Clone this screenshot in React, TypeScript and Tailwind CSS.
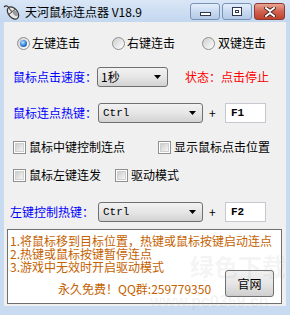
import React from "react";

function Radio({ checked }: { checked?: boolean }) {
  return (
    <span className="inline-flex h-[13px] w-[13px] shrink-0 items-center justify-center rounded-full border border-[#8e8f8f] bg-linear-to-br from-[#cfcfcf] to-[#ffffff]">
      {checked ? (
        <span className="h-[7px] w-[7px] rounded-full bg-[radial-gradient(circle_at_40%_35%,#bfe6ff,#2a7ad6_55%,#174c94)]" />
      ) : (
        <span className="h-[7px] w-[7px] rounded-full bg-linear-to-br from-[#d4d4d4] to-[#f8f8f8]" />
      )}
    </span>
  );
}

function Check() {
  return (
    <span className="inline-flex h-[13px] w-[13px] shrink-0 items-center justify-center border border-[#8e8f8f] bg-white">
      <span className="h-[9px] w-[9px] border border-[#d0d0d0] bg-linear-to-br from-[#cdcdcd] to-[#f6f6f6]" />
    </span>
  );
}

function Arrow() {
  return (
    <svg width="7" height="4" viewBox="0 0 7 4">
      <path d="M0 0h7L3.5 4z" fill="#000" />
    </svg>
  );
}

function Combo({ text, wide }: { text: string; wide?: boolean }) {
  return (
    <div
      className={
        wide
          ? "flex h-[20px] w-[105px] shrink-0 items-center justify-between rounded-[3px] border border-[#707070] bg-linear-to-b from-[#f2f2f2] via-[#e6e6e6] to-[#d2d2d2] pl-[4px] pr-[6px]"
          : "flex h-[20px] w-[71px] shrink-0 items-center justify-between rounded-[3px] border border-[#707070] bg-linear-to-b from-[#f2f2f2] via-[#e6e6e6] to-[#d2d2d2] pl-[3px] pr-[6px]"
      }
    >
      {wide ? (
        <span className="font-['Liberation_Mono',monospace] text-[11px] leading-none text-black">{text}</span>
      ) : (
        <span className="text-[12px] leading-none text-black">{text}</span>
      )}
      <Arrow />
    </div>
  );
}

function TextBox({ text }: { text: string }) {
  return (
    <div className="flex h-[20px] w-[41px] shrink-0 items-center border border-[#c5c8cf] bg-white pl-[5px] font-['Liberation_Mono',monospace] text-[11px] font-bold leading-none text-black">
      {text}
    </div>
  );
}

function MouseIcon() {
  return (
    <svg width="18" height="16" viewBox="0 0 18 16">
      <path d="M1 3 C3 1 5 2 6 4" stroke="#333" strokeWidth="1.2" fill="none" />
      <g transform="rotate(-40 10 9)">
        <ellipse cx="10" cy="9" rx="4.5" ry="7" fill="#e8e8e8" stroke="#333" strokeWidth="1.2" />
        <path d="M5.6 7.5h8.8M10 2v5.5" stroke="#555" strokeWidth="1" />
        <ellipse cx="11.5" cy="11" rx="2" ry="3" fill="#9a9a9a" />
      </g>
    </svg>
  );
}

export default function App() {
  return (
    <div className="relative flex h-[315px] w-[290px] flex-col overflow-hidden bg-[#c9dbf1] font-['Noto_Sans_CJK_SC',sans-serif] text-[12px] text-black">
      {/* Title bar */}
      <div className="flex h-[22px] shrink-0 items-start bg-linear-to-b from-[#d9e6f6] to-[#c3d7ef]">
        <div className="ml-[3px] mt-[4px]">
          <MouseIcon />
        </div>
        <span className="ml-[4px] mt-[4px] text-[12px] leading-[16px] text-black">天河鼠标连点器 V18.9</span>
        <div className="ml-auto mr-[5px] mt-[3px] flex gap-[2px]">
          <div className="flex h-[17px] w-[30px] items-center justify-center rounded-[3px] border border-[#7a92b5] bg-linear-to-b from-[#e4eefb] via-[#c9daf0] to-[#b3c9e6]">
            <span className="mt-[5px] h-[4px] w-[11px] border border-[#2d3a4f] bg-white" />
          </div>
          <div className="flex h-[17px] w-[30px] items-center justify-center rounded-[3px] border border-[#7a92b5] bg-linear-to-b from-[#e4eefb] via-[#c9daf0] to-[#b3c9e6]">
            <span className="flex h-[9px] w-[10px] items-center justify-center border border-[#2d3a4f] bg-white">
              <span className="h-[3px] w-[4px] border border-[#2d3a4f]" />
            </span>
          </div>
          <div className="flex h-[17px] w-[31px] items-center justify-center rounded-[3px] border border-[#8a3a33] bg-linear-to-b from-[#e9a593] via-[#d0624f] to-[#c0402e]">
            <svg width="12" height="10" viewBox="0 0 12 10">
              <path d="M2 1l4 3 4-3M2 9l4-3 4 3" stroke="#3a1a16" strokeWidth="3.6" fill="none" strokeLinecap="square" />
              <path d="M2 1l4 3 4-3M2 9l4-3 4 3" stroke="#fff" strokeWidth="2" fill="none" strokeLinecap="square" />
            </svg>
          </div>
        </div>
      </div>

      {/* Client area */}
      <div className="mx-[4px] flex h-[284px] shrink-0 flex-col bg-[#f0f0f0]">
        {/* radios */}
        <div className="mt-[14px] flex h-[14px] items-center">
          <div className="ml-[13px] flex w-[95px] items-center gap-[2px]">
            <Radio checked />
            <span className="leading-none">左键连击</span>
          </div>
          <div className="flex w-[90px] items-center gap-[2px]">
            <Radio />
            <span className="leading-none">右键连击</span>
          </div>
          <div className="flex items-center gap-[3px]">
            <Radio />
            <span className="leading-none">双键连击</span>
          </div>
        </div>

        {/* speed */}
        <div className="mt-[17px] flex h-[20px] items-center">
          <span className="ml-[9px] w-[84px] leading-none text-[#0000ff]">鼠标点击速度：</span>
          <Combo text="1秒" />
          <span className="ml-[17px] leading-none text-[#ff0000]">状态：点击停止</span>
        </div>

        {/* hotkey */}
        <div className="mt-[16px] flex h-[20px] items-center">
          <span className="ml-[9px] w-[85px] leading-none text-[#0000ff]">鼠标连点热键：</span>
          <Combo text="Ctrl" wide />
          <span className="ml-[6px] w-[16px] leading-none">+</span>
          <TextBox text="F1" />
        </div>

        {/* checkboxes row 1 */}
        <div className="mt-[17px] flex h-[14px] items-center">
          <div className="ml-[9px] flex w-[145px] items-center gap-[3px]">
            <Check />
            <span className="leading-none">鼠标中键控制连点</span>
          </div>
          <div className="flex items-center gap-[3px]">
            <Check />
            <span className="leading-none">显示鼠标点击位置</span>
          </div>
        </div>

        {/* checkboxes row 2 */}
        <div className="mt-[14px] flex h-[14px] items-center">
          <div className="ml-[9px] flex w-[102px] items-center gap-[3px]">
            <Check />
            <span className="leading-none">鼠标左键连发</span>
          </div>
          <div className="flex items-center gap-[3px]">
            <Check />
            <span className="leading-none">驱动模式</span>
          </div>
        </div>

        {/* left hotkey */}
        <div className="mt-[20px] flex h-[20px] items-center">
          <span className="ml-[6px] w-[88px] leading-none text-[#0000ff]">左键控制热键：</span>
          <Combo text="Ctrl" wide />
          <span className="ml-[6px] w-[16px] leading-none">+</span>
          <TextBox text="F2" />
        </div>

        {/* info box */}
        <div className="relative ml-[3px] mt-[7px] h-[75px] w-[275px] border border-[#6f6f6f] bg-white pl-[2px] pt-[4px] text-[#c46200]">
          <div className="whitespace-nowrap leading-[13px]">1.将鼠标移到目标位置，热键或鼠标按键启动连点</div>
          <div className="whitespace-nowrap leading-[13px]">2.热键或鼠标按键暂停连点</div>
          <div className="whitespace-nowrap leading-[13px]">3.游戏中无效时开启驱动模式</div>
          <div className="ml-[48px] mt-[9px] whitespace-nowrap leading-[13px]">永久免费！QQ群:259779350</div>
          <div className="absolute bottom-[6px] right-[7px] flex h-[27px] w-[49px] items-center justify-center rounded-[3px] border border-[#707070] bg-linear-to-b from-[#f2f2f2] via-[#e6e6e6] to-[#cfcfcf] text-[12px] leading-none text-black">
            官网
          </div>
        </div>
      </div>

      {/* watermark */}
      <span className="pointer-events-none absolute left-[190px] top-[254px] whitespace-nowrap text-[24px] font-bold leading-none text-[#909090]/10">
        绿色下载
      </span>
      <span className="pointer-events-none absolute left-[150px] top-[294px] whitespace-nowrap font-['Liberation_Sans',sans-serif] text-[16px] font-bold leading-none text-[#909090]/10">
        www.pc0359.cn
      </span>
    </div>
  );
}
